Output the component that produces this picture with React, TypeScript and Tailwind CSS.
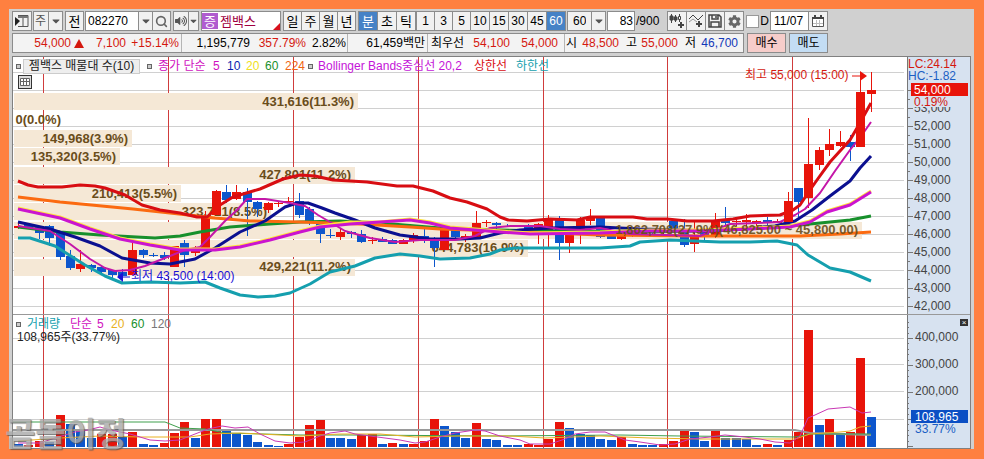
import { useState } from "react";
import type { ReactNode } from "react";
import { FaCaretDown, FaCog, FaVolumeUp } from "react-icons/fa";
import { Search } from "lucide-react";

const RED = "#e8140a";
const BLUE = "#0d56cc";
const STEP = 10.4;
const FIRST_X = 18;

// [up, body top, body bottom, wick top, wick bottom]
type Candle = [number, number, number, number, number];

const candles: Candle[] = [
  [1, 226, 228, 223, 229], [0, 224, 228, 224, 228], [0, 227, 233, 226, 239], [0, 226, 238, 225, 246],
  [0, 233, 257, 232, 260], [0, 256, 268, 250, 270], [1, 264, 269, 250, 272], [0, 265, 268, 264, 272],
  [0, 267, 272, 266, 273], [0, 270, 275, 270, 278], [0, 272, 276, 269, 279], [1, 250, 275, 239, 275],
  [0, 250, 255, 249, 258], [0, 255, 256, 253, 257], [0, 255, 258, 252, 260], [1, 246, 267, 246, 267],
  [0, 243, 255, 240, 267], [1, 248, 253, 246, 256], [1, 216, 248, 211, 248], [1, 191, 215, 190, 215],
  [0, 192, 200, 185, 203], [1, 192, 199, 185, 200], [0, 192, 202, 188, 236], [0, 202, 209, 201, 217],
  [1, 203, 210, 202, 213], [1, 203, 204, 201, 207], [1, 201, 202, 197, 203], [0, 201, 215, 193, 218],
  [0, 209, 223, 207, 225], [0, 222, 234, 221, 243], [0, 235, 236, 229, 238], [1, 232, 237, 229, 240],
  [0, 232, 234, 231, 238], [0, 234, 242, 230, 243], [1, 240, 241, 237, 244], [0, 239, 242, 237, 242],
  [0, 240, 244, 239, 244], [1, 240, 244, 239, 244], [1, 235, 241, 233, 243], [0, 236, 240, 226, 243],
  [0, 240, 248, 237, 267], [1, 229, 250, 229, 250], [0, 228, 237, 228, 238], [1, 236, 238, 234, 242],
  [1, 223, 237, 211, 238], [1, 222, 223, 220, 227], [0, 223, 225, 222, 232], [0, 226, 227, 224, 227],
  [0, 225, 226, 225, 227], [0, 226, 233, 224, 234], [1, 224, 233, 223, 244], [1, 220, 234, 215, 247],
  [0, 220, 243, 216, 260], [1, 233, 243, 232, 253], [1, 220, 234, 217, 244], [1, 217, 221, 209, 225],
  [0, 218, 237, 217, 238], [0, 236, 239, 235, 239], [1, 234, 239, 233, 240], [1, 230, 234, 229, 237],
  [0, 230, 233, 229, 234], [0, 230, 232, 229, 234], [1, 229, 233, 228, 234], [0, 221, 229, 220, 230],
  [0, 229, 245, 219, 247], [1, 236, 244, 221, 252], [0, 232, 236, 231, 240], [1, 220, 237, 213, 238],
  [0, 219, 223, 207, 225], [1, 221, 222, 219, 226], [1, 220, 222, 214, 226], [1, 221, 223, 220, 226],
  [0, 220, 223, 217, 226], [1, 221, 223, 219, 223], [1, 201, 222, 192, 222], [0, 188, 202, 188, 217],
  [1, 164, 198, 118, 208], [1, 150, 165, 147, 170], [1, 144, 150, 129, 156], [1, 142, 146, 131, 147],
  [0, 142, 147, 135, 161], [1, 92, 147, 77, 147], [1, 90, 94, 72, 112],
];

// [up, bar height]
const volumes: [number, number][] = [
  [0, 3], [1, 2], [1, 6], [0, 5], [1, 32], [0, 23], [0, 17], [0, 9], [1, 13], [1, 13], [0, 10],
  [1, 15], [0, 3], [0, 2], [1, 4], [1, 14], [1, 25], [0, 9], [1, 28], [1, 28], [0, 17], [0, 14],
  [0, 12], [0, 5], [0, 2], [0, 1], [1, 3], [1, 10], [1, 22], [1, 27], [0, 9], [0, 9], [0, 8],
  [1, 12], [1, 13], [0, 3], [1, 4], [0, 3], [1, 3], [1, 6], [1, 28], [0, 21], [0, 15], [0, 9],
  [1, 24], [0, 8], [0, 7], [0, 2], [0, 2], [1, 3], [1, 2], [1, 8], [1, 25], [0, 19], [0, 13],
  [0, 12], [0, 8], [0, 7], [1, 10], [0, 3], [0, 2], [0, 2], [1, 3], [1, 6], [1, 18], [0, 15],
  [0, 6], [1, 17], [0, 9], [0, 9], [0, 8], [0, 2], [1, 3], [0, 2], [1, 7], [1, 15], [1, 117],
  [0, 22], [1, 28], [0, 14], [1, 15], [1, 89], [0, 30],
];

const priceLines = [
  { name: "하한선", color: "#159fae", width: 3, points: "18,238 30,238 55,246 85,265 105,276 122,283 150,282 180,283 205,282 220,288 240,295 258,297 275,296 290,293 310,284 330,272 355,266 375,258 400,254 420,256 440,259 470,258 490,254 500,250 515,248 560,248 600,248 630,246 640,242 670,240 720,242 750,242 777,241 797,245 808,255 830,268 850,272 871,281" },
  { name: "60", color: "#17902c", width: 3, points: "18,227 60,232 100,235 155,238 180,236 200,232 230,227 270,224 300,222 340,221 380,223 440,228 500,230 550,231 640,232 700,231 760,228 800,225 830,222 850,220 871,216" },
  { name: "224", color: "#fb6a10", width: 3, points: "18,197 60,202 133,209 170,213 215,218 250,221 300,222 360,224 410,227 440,229 500,231 550,233 600,235 700,236 800,236 840,234 871,232" },
  { name: "10", color: "#0b1090", width: 3, points: "18,222 50,229 75,237 100,246 122,258 150,263 170,264 195,259 215,248 240,232 265,221 285,207 297,203 308,203 322,208 335,213 355,220 375,228 400,235 430,239 460,239 480,238 500,233 520,230 550,228 600,227 640,229 680,230 710,231 740,229 775,226 795,221 812,210 830,196 850,181 860,168 871,156" },
  { name: "5", color: "#c416a8", width: 2, points: "18,226 50,231 70,244 90,259 105,268 115,271 130,270 145,266 165,258 185,250 200,247 210,237 225,221 237,210 247,199 265,199 290,203 305,206 318,215 330,222 345,231 370,238 395,242 420,240 455,240 475,236 490,228 510,226 540,226 560,229 580,230 600,228 630,234 700,236 730,224 780,222 795,215 805,209 820,193 835,171 850,150 862,135 871,122" },
  { name: "20", color: "#ffe43c", width: 3, points: "18,208 60,217 90,228 120,238 150,244 180,249 215,249 240,246 270,239 300,231 320,226 350,222 380,222 410,219 430,222 450,227 475,229 500,231 530,233 600,232 650,230 700,230 750,228 790,226 810,221 827,211 850,204 871,191" },
  { name: "중심선", color: "#cb14cf", width: 3, points: "18,209 60,218 90,229 120,239 150,245 180,250 215,250 240,247 270,240 300,232 320,227 350,224 380,222 410,220 430,223 450,228 475,230 500,232 530,234 600,233 650,231 700,231 750,229 790,227 810,222 827,212 850,205 871,192" },
  { name: "상한선", color: "#d80d12", width: 3, points: "18,181 28,185 38,187 62,187 80,185 95,186 105,188 125,195 142,205 160,210 180,213 197,217 207,217 220,205 233,197 260,189 283,179 300,175 315,176 333,180 367,182 397,186 413,186 433,191 450,198 467,202 487,209 500,217 508,220 527,221 550,219 577,220 590,217 633,217 647,219 667,219 687,221 713,221 733,219 750,216 780,215 793,210 800,205 810,190 817,180 830,162 850,140 857,128 871,103" },
];

const volumeLines = [
  { name: "120", color: "#9a9a9a", width: 2, points: "13,430 667,430 795,430 810,433 871,435" },
  { name: "60", color: "#3f9f4c", width: 1, points: "13,422 165,422 180,428 205,429 225,433 300,435 350,435 500,436 620,435 680,436 795,437 810,434 871,434" },
  { name: "20", color: "#e9b021", width: 1, points: "18,441 60,438 100,436 140,437 190,437 210,434 240,433 260,434 300,436 340,434 380,434 415,437 460,436 510,436 545,438 600,436 650,438 700,439 795,439 810,434 840,432 850,431 860,427 871,426" },
  { name: "5", color: "#c938b4", width: 1, points: "18,443 40,443 55,438 75,432 88,430 100,427 110,430 130,434 150,440 165,441 180,440 195,434 208,429 222,426 235,428 248,427 260,434 275,441 290,443 305,442 320,436 330,433 345,431 355,434 370,436 385,438 400,440 415,443 425,442 440,437 455,433 475,430 485,431 500,436 520,440 530,444 550,444 565,439 575,434 590,432 605,432 615,436 625,440 640,442 660,445 675,444 690,439 710,437 725,435 745,437 760,439 775,442 790,443 800,436 808,418 815,415 828,409 850,407 862,413 871,412" },
];

const profile = [
  { end: 358, label: "431,616(11.3%)" },
  { end: 65, label: "0(0.0%)", empty: true },
  { end: 132, label: "149,968(3.9%)" },
  { end: 120, label: "135,320(3.5%)" },
  { end: 355, label: "427,801(11.2%)" },
  { end: 181, label: "210,413(5.5%)" },
  { end: 271, label: "323,721(8.5%)" },
  { end: 862, label: "1,862,708(27.9%)(46,825.00 ~ 45,800.00)", current: true },
  { end: 528, label: "644,783(16.9%)" },
  { end: 355, label: "429,221(11.2%)" },
];

const dayLines = [43, 168, 293, 418, 543, 667, 792];
const prices = [54, 53, 52, 51, 50, 49, 48, 47, 46, 45, 44, 43, 42];
const tools = ["candle", "line", "save", "gear"];

const font = "font-['Liberation_Sans','Noto_Sans_CJK_KR',sans-serif]";
const frame = "h-full flex items-center justify-center border border-[#8c8c8c]";

type BtnProps = {
  children: ReactNode;
  className?: string;
  label?: string;
  active?: boolean;
  onClick?: () => void;
};

function Btn({ children, className = "", label, active, onClick }: BtnProps) {
  return (
    <button
      type="button"
      aria-label={label}
      onClick={onClick}
      className={`${frame} shrink-0 ${active ? "bg-[#4682c6] text-white" : "bg-[#f1f1f1]"} ${className}`}
    >
      {children}
    </button>
  );
}

function ToolIcon({ name }: { name: string }) {
  if (name === "gear") return <FaCog className="text-[13px] text-[#666]" />;
  return (
    <svg viewBox="0 0 16 16" className="w-4 h-4" fill="none" stroke="#444" strokeWidth="1">
      {name === "candle" && (
        <>
          <path d="M2.5 1v9M6.5 2v7M10.5 1v8" />
          <path d="M1 3h3v4H1zM5 4h3v3H5z" fill="#444" />
          <path d="M9.5 3.5h2v3h-2z" fill="#fff" />
          <path d="M12 9v6M9 12h6" strokeWidth="2" />
        </>
      )}
      {name === "line" && (
        <>
          <path d="M1 6l4-4 5 5 5-5" />
          <path d="M1 9l4-3 4 3" stroke="#999" />
          <path d="M11 8v6M8 11h6" strokeWidth="2" />
        </>
      )}
      {name === "save" && <path d="M2 2h10l2 2v10H2zM5 2v4h6V2M4 14V9h8v5M9 3v2" strokeWidth="1.5" />}
    </svg>
  );
}

function Toolbar() {
  const [unit, setUnit] = useState("분");
  const [minute, setMinute] = useState("60");

  return (
    <header className="flex h-5 text-[12px] leading-none text-black whitespace-nowrap">
      <Btn label="패널" className="w-5">
        <svg viewBox="0 0 16 16" className="w-4 h-4">
          <path d="M4 2.5h10v11H4M9 2.5v11" fill="none" stroke="#555" />
          <path d="M4 3h10v2H4z" fill="#777" />
          <path d="M1 4l5 4-5 5z" fill="#222" />
        </svg>
      </Btn>
      <div className="flex ml-px">
        <select aria-label="구분" className={`${frame} w-4 appearance-none px-px bg-[#f1f1f1] text-[#555]`}>
          <option>주</option>
        </select>
        <Btn label="구분 열기" className="w-[15px] -ml-px"><FaCaretDown className="text-[#555]" /></Btn>
      </div>
      <Btn className="w-[19px] ml-[2px] text-[13px]">전</Btn>
      <div className="flex ml-px">
        <input aria-label="종목코드" defaultValue="082270" className="h-full w-[54px] px-[2px] border border-[#8c8c8c] bg-white" />
        <Btn label="종목 목록" className="w-[15px] -ml-px"><FaCaretDown className="text-[#555]" /></Btn>
        <Btn label="검색" className="w-[19px] -ml-px"><Search className="w-[13px] h-[13px] text-[#666]" strokeWidth={3} /></Btn>
      </div>
      <div className="flex ml-[2px]">
        <Btn label="소리" className="w-4"><FaVolumeUp className="text-[#555]" /></Btn>
        <Btn label="소리 설정" className="w-[11px] -ml-px"><FaCaretDown className="text-[10px] text-[#555]" /></Btn>
      </div>
      <div className="relative flex items-center h-full w-20 ml-[2px] border border-[#8c8c8c] bg-white text-[13px] text-[#a00040]">
        <span className="w-4 h-4 flex items-center justify-center bg-[#b05ccf] text-white">증</span>
        <span className="ml-[2px]">젬백스</span>
        <svg viewBox="0 0 7 7" className="absolute right-0 bottom-0 w-[7px] h-[7px]"><path d="M7 0v7H0z" fill="#d8101c" /></svg>
      </div>
      <div className="flex ml-[2px] text-[13px]">
        {["일", "주", "월", "년"].map((u) => (
          <Btn key={u} className="w-[19px] -mr-px" active={unit === u} onClick={() => setUnit(u)}>{u}</Btn>
        ))}
      </div>
      <div className="flex ml-[3px] text-[13px]">
        {["분", "초", "틱"].map((u) => (
          <Btn key={u} className="w-5 -mr-px" active={unit === u} onClick={() => setUnit(u)}>{u}</Btn>
        ))}
      </div>
      <div className="flex ml-px">
        {["1", "3", "5", "10", "15", "30", "45", "60"].map((m) => (
          <Btn
            key={m}
            className={m.length > 1 ? "w-5 -mr-px" : "w-[19px] -mr-px"}
            active={minute === m}
            onClick={() => setMinute(m)}
          >
            {m}
          </Btn>
        ))}
      </div>
      <div className="flex ml-[2px]">
        <select aria-label="분 선택" className={`${frame} w-[25px] appearance-none px-[5px] bg-[#f1f1f1]`}>
          <option>60</option>
        </select>
        <Btn label="분 열기" className="w-[15px] -ml-px"><FaCaretDown className="text-[#555]" /></Btn>
      </div>
      <label className="flex items-center ml-px">
        <input aria-label="봉 개수" defaultValue="83" className="h-full w-7 mr-px pr-px text-right border border-[#8c8c8c] bg-white" />
        /900
      </label>
      <div className="flex ml-2">
        {tools.map((t) => (
          <Btn key={t} label={t} className="w-5 -mr-px"><ToolIcon name={t} /></Btn>
        ))}
      </div>
      <label className="flex items-center gap-px ml-[3px]">
        <input type="checkbox" className="appearance-none w-[13px] h-[13px] border border-[#999] bg-white" />D
      </label>
      <input aria-label="날짜" defaultValue="11/07" className="h-full w-[39px] ml-px px-[3px] border border-[#8c8c8c] bg-white" />
      <Btn label="달력" className="w-5 -ml-px">
        <svg viewBox="0 0 12 12" className="w-3 h-3">
          <path d="M.5 2.5h11v9H.5z" fill="#fff" stroke="#555" />
          <path d="M4.5 5v6M7.5 5v6M1 8.5h10" fill="none" stroke="#bbb" />
          <path d="M0 2h12v2H0zM2 0h2v3H2zM8 0h2v3H8z" fill="#444" />
        </svg>
      </Btn>
    </header>
  );
}

function QuoteBar() {
  return (
    <div className="flex h-5 gap-[3px] mt-[2px] text-[12px] leading-none text-black whitespace-nowrap">
      <div className="flex items-center h-full w-[732px] border border-[#8c8c8c] bg-[#f3f3f3] text-right">
        <div className="flex items-center h-full w-[169px] border-r border-[#b5b5b5] text-[#d4180f]">
          <span className="w-[58px]">54,000</span>
          <svg viewBox="0 0 10 9" className="w-[10px] h-[9px] ml-[3px]"><path d="M5 0l5 9H0z" fill="#d4180f" /></svg>
          <span className="w-[42px]">7,100</span>
          <span className="w-[53px]">+15.14%</span>
        </div>
        <div className="flex items-center h-full w-[166px] border-r border-[#b5b5b5]">
          <span className="w-[68px]">1,195,779</span>
          <span className="w-[56px] text-[#d4180f]">357.79%</span>
          <span className="w-[40px]">2.82%</span>
        </div>
        <div className="flex items-center justify-end h-full w-20 pr-[2px] border-r border-[#b5b5b5]">61,459백만</div>
        <div className="flex items-center h-full w-[137px] border-r border-[#b5b5b5]">
          <span className="w-[36px]">최우선</span>
          <span className="w-[46px] text-[#d4180f]">54,100</span>
          <span className="w-[48px] text-[#d4180f]">54,000</span>
        </div>
        <span className="w-[12px]">시</span>
        <span className="w-[42px] text-[#d4180f]">48,500</span>
        <span className="w-[18px]">고</span>
        <span className="w-[41px] text-[#d4180f]">55,000</span>
        <span className="w-[18px]">저</span>
        <span className="w-[42px] text-[#1238b8]">46,700</span>
      </div>
      <button type="button" className="w-[39px] border border-[#8c8c8c] bg-[#f6cdca]">매수</button>
      <button type="button" className="w-[39px] border border-[#8c8c8c] bg-[#c3ddf4]">매도</button>
    </div>
  );
}

function Marker() {
  return <span className="w-[5px] h-[5px] shrink-0 border border-[#666] bg-[#ccc]" />;
}

function ProfileLabel({ index }: { index: number }) {
  const p = profile[index];
  return (
    <text x={p.end - 4} y={106 + Math.round(index * 18.3)} textAnchor="end" fontSize="13" fontWeight="bold" fill="#6a4d1a">
      {p.label}
    </text>
  );
}

function PriceChart() {
  return (
    <div className="relative">
      <svg viewBox="13 57 957 258" className="block w-full h-auto">
        <rect x="13" y="57" width="894" height="258" fill="#fff" />
        <g stroke="#d0d0d0">
          {[55, ...prices].map((p) => (
            <path key={p} d={`M13 ${72.5 + (55 - p) * 18}H904`} />
          ))}
        </g>
        <g fill="#d03c3c">
          {dayLines.map((x) => <rect key={x} x={x} y="57" width="1" height="258" />)}
        </g>
        {profile.map((p, i) => (
          <g key={p.label}>
            {!p.empty && <rect x="14" y={93 + Math.round(i * 18.4)} width={p.end - 14} height="17" fill="#f5e8d6" />}
            {!p.current && <ProfileLabel index={i} />}
          </g>
        ))}
        {candles.map(([up, top, bottom, high, low], i) => {
          const x = Math.round(FIRST_X + i * STEP);
          return (
            <g key={i} fill={up ? RED : BLUE}>
              <rect x={x} y={high} width="1" height={low - high} />
              <rect x={x - 4} y={top} width="9" height={bottom - top} />
            </g>
          );
        })}
        <g fill="none" strokeLinejoin="round">
          {priceLines.map((l) => (
            <polyline key={l.name} points={l.points} stroke={l.color} strokeWidth={l.width} />
          ))}
        </g>
        {/* the last tall candles sit in front of the averages */}
        {[19, 74, 76, 81].map((i) => (
          <rect key={i} x={Math.round(FIRST_X + i * STEP) - 4} y={candles[i][1]} width="9" height={candles[i][2] - candles[i][1]} fill={RED} />
        ))}
        {/* label of the current price band stays readable above the lines */}
        <g opacity="0.9">
          <ProfileLabel index={profile.findIndex((p) => p.current)} />
        </g>
        <g fontSize="12">
          <text x="745" y="79" fill="#d4180f">최고 55,000 (15:00)</text>
          <path d="M852 76h9" stroke={RED} />
          <path d="M860 71l7 5-7 5z" fill={RED} />
          <text x="131" y="280" fill="#1a10d8">최저 43,500 (14:00)</text>
          <path d="M122 277h8" stroke="#1a10d8" />
          <path d="M117 277l6-5v10z" fill="#1a10d8" />
        </g>

        <rect x="907" y="57" width="63" height="258" fill="#d7e2f0" />
        <path d="M907.5 57V315" stroke="#777" />
        <g stroke="#777">
          {prices.map((p) => (
            <path key={p} d={`M907 ${90.5 + (54 - p) * 18}h6M907 ${99.5 + (54 - p) * 18}h3`} />
          ))}
        </g>
        <g fontSize="12" fill="#444">
          {prices.slice(1).map((p) => (
            <text key={p} x="914" y={94 + (54 - p) * 18}>{`${p},000`}</text>
          ))}
          <rect x="912" y="96" width="57" height="11" fill="#d7e2f0" />
          <rect x="911" y="83" width="57" height="13" fill={RED} />
          <text x="914" y="94" fill="#fff">54,000</text>
          <text x="914" y="106" fill="#d4180f">0.19%</text>
          <text x="908" y="68" fill="#d4180f">LC:24.14</text>
          <text x="908" y="80" fill="#1b5fc4">HC:-1.82</text>
        </g>
        <path d="M13 314.5H970" stroke="#999" />
      </svg>

      <div className="absolute left-[3px] top-[2px] flex items-center text-[12px] leading-[13px] whitespace-nowrap">
        <Marker />
        <span className="ml-[2px] px-[2px] w-[117px] border border-[#ccc] bg-[#eee] text-[#222] text-center">젬백스 매물대 수(10)</span>
        <span className="w-[7px]" />
        <Marker />
        <span className="ml-[6px] w-[55px] text-[#d010c0]">종가 단순</span>
        <span className="w-[14px] text-[#d010c0]">5</span>
        <span className="w-[19px] text-[#0a1eb0]">10</span>
        <span className="w-[19px] text-[#f0e020]">20</span>
        <span className="w-[20px] text-[#17902c]">60</span>
        <span className="w-[23px] text-[#f06414]">224</span>
        <Marker />
        <span className="ml-[5px] w-[156px] text-[#c414d8]">Bollinger Bands중심선 20,2</span>
        <span className="w-[42px] text-[#d80d12]">상한선</span>
        <span className="text-[#159fae]">하한선</span>
      </div>
      <button type="button" aria-label="표 보기" className="absolute left-[5px] top-[18px] w-[14px] h-[14px] border border-[#333] bg-[#ddd]">
        <svg viewBox="0 0 12 12" className="w-3 h-3">
          <path d="M1.5 2.5h9v7h-9zM1.5 5.5h9M4.5 2.5v7M7.5 2.5v7" fill="#fff" stroke="#666" />
        </svg>
      </button>
    </div>
  );
}

function VolumeChart() {
  return (
    <div className="relative">
      <svg viewBox="13 315 957 133" className="block w-full h-auto">
        <rect x="13" y="315" width="894" height="133" fill="#fff" />
        <path d="M13 338.5H904M13 364.5H904M13 391.5H904M13 419.5H904" stroke="#d0d0d0" />
        <g fill="#d03c3c">
          {dayLines.map((x) => <rect key={x} x={x} y="315" width="1" height="133" />)}
        </g>
        {volumes.map(([up, h], i) => (
          <rect key={i} x={Math.round(FIRST_X + i * STEP) - 4} y={447 - h} width="9" height={h} fill={up ? RED : BLUE} />
        ))}
        <g fill="none">
          {volumeLines.map((l) => (
            <polyline key={l.name} points={l.points} stroke={l.color} strokeWidth={l.width} />
          ))}
        </g>
        <rect x="907" y="315" width="63" height="133" fill="#d7e2f0" />
        <path d="M907.5 315V448" stroke="#777" />
        <g stroke="#777">
          {Array.from({ length: 24 }, (_, i) => (
            <path key={i} d={`M907 ${Math.round(446 - i * 5.4) + 0.5}h${i % 5 === 0 ? 6 : 2}`} />
          ))}
        </g>
        <g fontSize="12" fill="#444">
          <text x="915" y="341">400,000</text>
          <text x="915" y="368">300,000</text>
          <text x="915" y="395">200,000</text>
          <rect x="911" y="410" width="57" height="13" fill="#0b4fc4" />
          <text x="915" y="421" fill="#fff">108,965</text>
          <text x="915" y="433" fill="#1b5fc4">33.77%</text>
        </g>
      </svg>
      <div className="absolute left-[3px] top-[3px] flex items-center text-[12px] leading-[13px] whitespace-nowrap">
        <Marker />
        <span className="ml-[6px] w-[43px] text-[#159fae]">거래량</span>
        <span className="w-[27px] text-[#d010c0]">단순</span>
        <span className="w-[14px] text-[#d010c0]">5</span>
        <span className="w-[20px] text-[#e9b021]">20</span>
        <span className="w-[20px] text-[#17902c]">60</span>
        <span className="text-[#777]">120</span>
      </div>
      <p className="absolute left-[4px] top-[16px] text-[12px] leading-[13px] text-[#222]">108,965주(33.77%)</p>
      <button type="button" aria-label="닫기" className="absolute right-[2px] top-[4px] w-[8px] h-[7px] flex items-center justify-center bg-[#333] text-[8px] leading-none text-white">×</button>
    </div>
  );
}

export default function App() {
  return (
    <div className={`min-h-screen bg-[#ff8040] pt-[9px] pl-[9px] pr-[10px] pb-[10px] ${font}`}>
      <main className="relative bg-[#d0d0d0] pt-[2px] px-[3px]">
        <Toolbar />
        <QuoteBar />
        <section className="mt-[3px] border border-[#808080] bg-white">
          <PriceChart />
          <VolumeChart />
        </section>
        <p className="absolute -left-1 -bottom-1 text-[33px] leading-[36px] font-bold text-[#a8a8a8] opacity-80 [text-shadow:1px_1px_1px_#555]">곰돌이정</p>
      </main>
    </div>
  );
}
